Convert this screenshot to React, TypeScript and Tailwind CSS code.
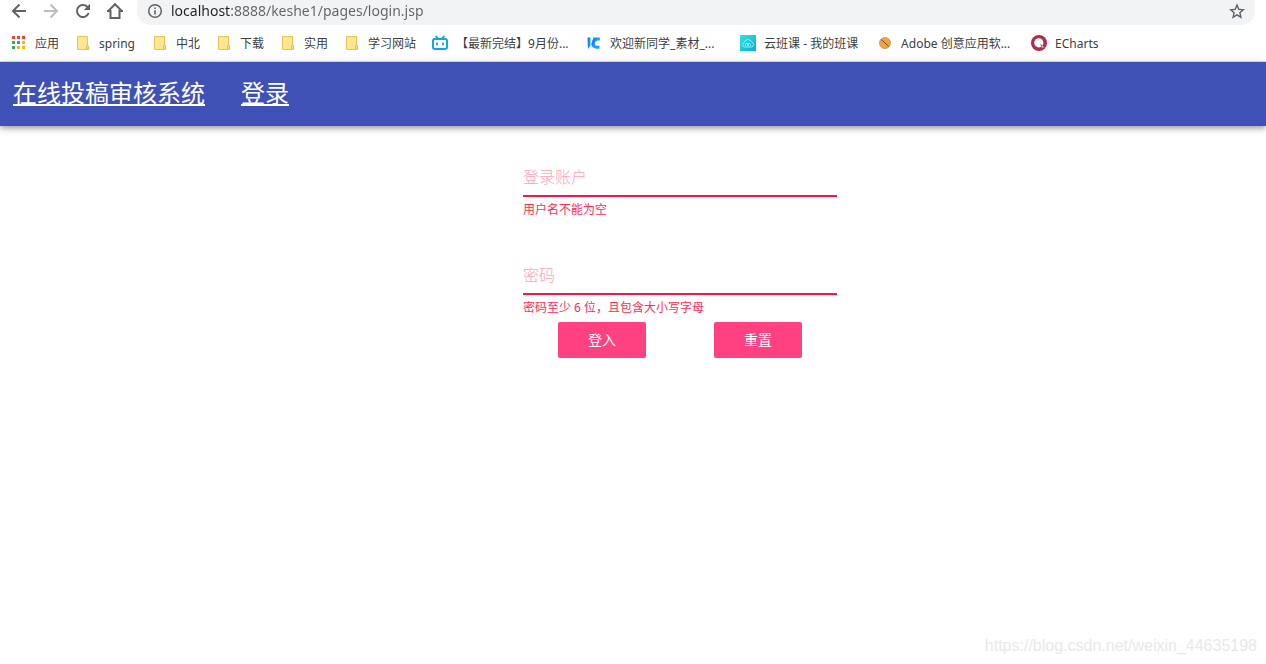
import React, { useState } from "react";

function BackIcon() {
  return (
    <svg viewBox="0 0 16 16" className="size-4" fill="none" stroke="#5f6368" strokeWidth="2" aria-hidden="true">
      <path d="M15 8H2.5M8.5 1.5L2 8l6.5 6.5" />
    </svg>
  );
}

function ForwardIcon() {
  return (
    <svg viewBox="0 0 16 16" className="size-4" fill="none" stroke="#bdbdbd" strokeWidth="2" aria-hidden="true">
      <path d="M1 8h12.5M7.5 1.5L14 8l-6.5 6.5" />
    </svg>
  );
}

function ReloadIcon() {
  return (
    <svg viewBox="0 0 16 16" className="size-4" aria-hidden="true">
      <path d="M13.6 10A6 6 0 1 1 12.2 3.8L14 5.6" fill="none" stroke="#5f6368" strokeWidth="2" />
      <path d="M15 .8V7H8.8z" fill="#5f6368" />
    </svg>
  );
}

function HomeIcon() {
  return (
    <svg viewBox="0 0 18 18" className="size-[18px]" fill="none" stroke="#5f6368" strokeWidth="2" aria-hidden="true">
      <path d="M1.6 9.6L9 2.2l7.4 7.4M1 9h3.5v7h9V9H17" />
    </svg>
  );
}

function InfoIcon() {
  return (
    <svg viewBox="0 0 16 16" className="size-4" aria-hidden="true">
      <circle cx="8" cy="8" r="6.3" fill="none" stroke="#5f6368" strokeWidth="1.5" />
      <path d="M7.2 4.4h1.6V6H7.2zM7.2 7.2h1.6v4.4H7.2z" fill="#5f6368" />
    </svg>
  );
}

function StarIcon() {
  return (
    <svg viewBox="0 0 24 24" className="size-4" fill="#5f6368" aria-hidden="true">
      <path d="M24 9.3l-8.6-.8L12 .5 8.6 8.5 0 9.3l6.5 5.7L4.6 23.5 12 19l7.4 4.500-1.900-8.500zM12 16.600l-4.300 2.600 1.100-4.900L5 11l5-.4 2-4.700 2 4.700 5 .4-3.800 3.300 1.100 4.900z" />
    </svg>
  );
}

const appColors = ["#ea4335", "#ea4335", "#ea4335", "#34a853", "#4285f4", "#fbbc05", "#34a853", "#fbbc05", "#fbbc05"];

function AppsIcon() {
  return (
    <svg viewBox="0 0 16 16" className="size-4" aria-hidden="true">
      {appColors.map((color, i) => (
        <rect key={i} x={1 + (i % 3) * 5} y={1 + Math.floor(i / 3) * 5} width="3" height="3" fill={color} />
      ))}
    </svg>
  );
}

function FolderIcon() {
  return (
    <svg viewBox="0 0 16 16" className="size-4" aria-hidden="true">
      <path d="M2.5 1.5h10v9l1 .5v3.500h-11z" fill="#ffe693" stroke="#e8c455" />
      <path d="M11.500 14v-3.500h1.500V14z" fill="#fff0b8" stroke="#e8c455" />
    </svg>
  );
}

function TvIcon() {
  return (
    <svg viewBox="0 0 16 16" className="size-4" fill="none" stroke="#12a7df" strokeWidth="2" strokeLinecap="round" aria-hidden="true">
      <rect x="1" y="4" width="14" height="10" rx="2" />
      <path d="M4.200 1.500l1.500 2M11.800 1.500l-1.500 2" />
      <path d="M5 8.400v.8M11 8.400v.8" />
    </svg>
  );
}

function ClassroomIcon() {
  return (
    <svg viewBox="0 0 16 16" className="size-4" aria-hidden="true">
      <defs>
        <linearGradient id="kc" x1="0" y1="0" x2="1" y2="0">
          <stop offset="0" stopColor="#0a6fff" />
          <stop offset="1" stopColor="#1fa9ff" />
        </linearGradient>
      </defs>
      <path d="M1.500 2.500h3v8L2 14z" fill="url(#kc)" />
      <path d="M13.800 4h-2.800Q7.500 4.500 7.300 8.300T10.800 12.300h2.700" fill="none" stroke="#1c9cff" strokeWidth="3" />
      <path d="M7.500 2.500h3L6.500 12 5.300 9.500z" fill="#1685ff" />
    </svg>
  );
}

function CloudIcon() {
  return (
    <svg viewBox="0 0 16 16" className="size-4" aria-hidden="true">
      <defs>
        <linearGradient id="cloud" x1="0" y1="0" x2="1" y2="1">
          <stop offset="0" stopColor="#2fe3dc" />
          <stop offset="1" stopColor="#06aed0" />
        </linearGradient>
      </defs>
      <rect width="16" height="16" fill="url(#cloud)" />
      <path d="M4.500 12a2.300 2.300 0 0 1-.2-4.500 3.800 3.800 0 0 1 7.200-.6A2.600 2.600 0 0 1 11.500 12zM5.500 11V9.500a1.200 1.200 0 0 1 2.400 0V11M8 11V9.500a1.200 1.200 0 0 1 2.400 0V11M6 8.500h4" fill="none" stroke="#b4f5f4" strokeWidth=".8" />
    </svg>
  );
}

function AdobeIcon() {
  return (
    <svg viewBox="0 0 16 16" className="size-4" aria-hidden="true">
      <circle cx="8" cy="8" r="5.500" fill="#f9a334" stroke="#a9937a" strokeWidth=".8" />
      <path d="M4.200 4.500l7.600 7" stroke="#6b5130" strokeWidth="1" />
    </svg>
  );
}

function EChartsIcon() {
  return (
    <svg viewBox="0 0 16 16" className="size-4" aria-hidden="true">
      <circle cx="8" cy="8" r="8" fill="#b02c49" />
      <circle cx="7.800" cy="7.800" r="4.600" fill="#fff" />
      <path d="M8.500 8.500l4.800 4-3-.3z" fill="#fff" />
      <path d="M9.300 8.500l.8 3.200 1.600-.4z" fill="#b02c49" />
    </svg>
  );
}

type Bookmark = { label: string; icon: React.ReactNode; width?: string };

const bookmarks: Bookmark[] = [
  { label: "应用", icon: <AppsIcon /> },
  { label: "spring", icon: <FolderIcon />, width: "w-[37px]" },
  { label: "中北", icon: <FolderIcon /> },
  { label: "下载", icon: <FolderIcon /> },
  { label: "实用", icon: <FolderIcon /> },
  { label: "学习网站", icon: <FolderIcon /> },
  { label: "【最新完结】9月份...", icon: <TvIcon />, width: "w-[114px]" },
  { label: "欢迎新同学_素材_...", icon: <ClassroomIcon />, width: "w-[114px]" },
  { label: "云班课 - 我的班课", icon: <CloudIcon />, width: "w-[97px]" },
  { label: "Adobe 创意应用软...", icon: <AdobeIcon />, width: "w-[114px]" },
  { label: "ECharts", icon: <EChartsIcon /> },
];

function BrowserBar() {
  const [url, setUrl] = useState("localhost:8888/keshe1/pages/login.jsp");
  return (
    <div className="border-b border-[#d9dbde] bg-white">
      <div className="flex h-[25px] items-start pr-[11px]">
        <nav className="flex h-[22px] shrink-0 items-center pl-[3px]" aria-label="浏览器导航">
          <button type="button" aria-label="后退" className="flex w-8 justify-center"><BackIcon /></button>
          <button type="button" aria-label="前进" className="flex w-8 justify-center"><ForwardIcon /></button>
          <button type="button" aria-label="刷新" className="flex w-8 justify-center"><ReloadIcon /></button>
          <button type="button" aria-label="主页" className="flex w-8 justify-center"><HomeIcon /></button>
        </nav>
        <div className="ml-[6px] flex h-[25px] min-w-0 flex-1 items-start rounded-b-[14px] bg-[#f1f3f4] px-[10px]">
          <div className="flex h-[22px] min-w-0 flex-1 items-center gap-2">
            <InfoIcon />
            <input
              type="text"
              aria-label="地址"
              value={url}
              onChange={(e) => setUrl(e.target.value)}
              className="h-[22px] min-w-0 flex-1 bg-[linear-gradient(90deg,#202124_60px,#5f6368_60px)] bg-clip-text text-[14px] leading-[22px] text-transparent caret-black outline-none"
            />
            <button type="button" aria-label="收藏"><StarIcon /></button>
          </div>
        </div>
      </div>
      <ul className="flex h-9 items-center gap-4 overflow-hidden pl-[11px] text-[12px] leading-4 text-[#3c4043]">
        {bookmarks.map((b) => (
          <li key={b.label} className="shrink-0">
            <a href="#" className="flex items-center gap-2 whitespace-nowrap">
              {b.icon}
              <span className={`pt-0.5 ${b.width ?? ""}`}>{b.label}</span>
            </a>
          </li>
        ))}
      </ul>
    </div>
  );
}

function Field({ id, type, label, error }: { id: string; type: string; label: string; error: string }) {
  return (
    <div>
      <input
        id={id}
        type={type}
        placeholder={label}
        aria-label={label}
        aria-describedby={id + "-error"}
        className="block h-9 w-full border-b-2 border-[#f5174a] pb-0.5 text-[16px] font-light outline-none placeholder:text-[#ffa3b8] placeholder:opacity-100"
      />
      <p id={id + "-error"} className="mt-1 text-[12px] leading-[18px] text-[#ff2a58]">{error}</p>
    </div>
  );
}

const buttonClass = "h-9 w-[88px] rounded-[2px] bg-[#ff4081] pb-0.5 text-[14px] text-white";

export default function App() {
  return (
    <div className="flex min-h-screen flex-col bg-white font-['Noto_Sans','Noto_Sans_CJK_SC',sans-serif]">
      <BrowserBar />
      <header className="flex h-16 shrink-0 items-center gap-9 bg-[#3f51b5] px-[13px] pb-0.5 text-[24px] text-white shadow-[0_2px_4px_-1px_rgba(0,0,0,0.2),0_4px_5px_0_rgba(0,0,0,0.14),0_1px_10px_0_rgba(0,0,0,0.12)]">
        <a href="#" className="underline">在线投稿审核系统</a>
        <a href="#" className="underline">登录</a>
      </header>
      <main className="flex justify-center pt-[35px] pl-[94px]">
        <form className="w-[314px]" onSubmit={(e) => e.preventDefault()}>
          <div className="flex flex-col gap-10">
            <Field id="account" type="text" label="登录账户" error="用户名不能为空" />
            <Field id="password" type="password" label="密码" error="密码至少 6 位，且包含大小写字母" />
          </div>
          <div className="mt-[5px] flex justify-center gap-[68px]">
            <button type="submit" className={buttonClass}>登入</button>
            <button type="reset" className={buttonClass}>重置</button>
          </div>
        </form>
      </main>
      <footer className="mt-auto pr-[9px] pb-2 text-right font-['Liberation_Sans',sans-serif] text-[16px] leading-5 text-[#e8e8e8]">
        https://blog.csdn.net/weixin_44635198
      </footer>
    </div>
  );
}
